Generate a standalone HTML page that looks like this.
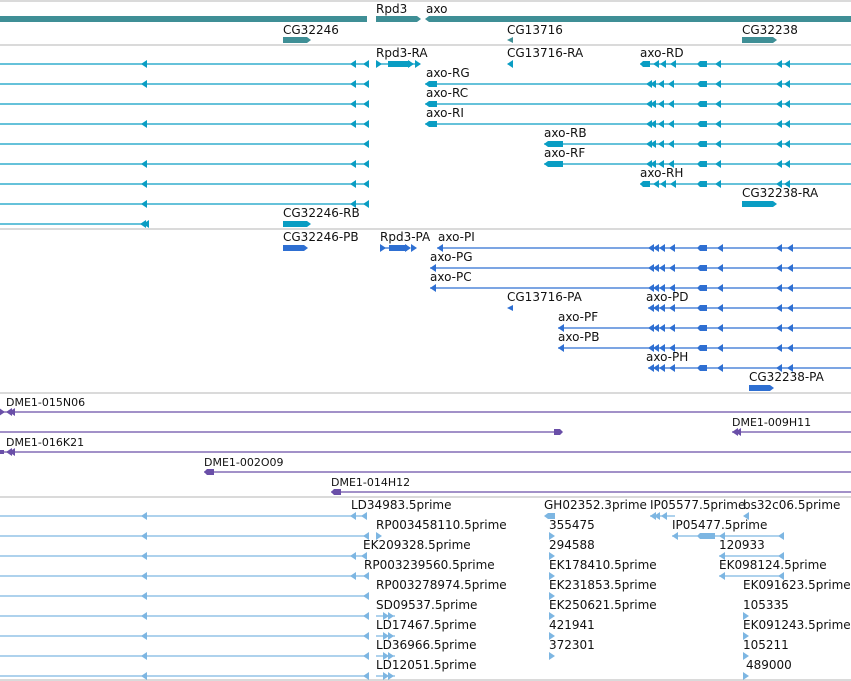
<!DOCTYPE html>
<html><head><meta charset="utf-8"><style>
html,body{margin:0;padding:0;background:#fff;width:851px;height:681px;overflow:hidden}
svg{display:block}
text{font-family:"DejaVu Sans","Liberation Sans",sans-serif;font-size:12px;fill:#111}
.d text{font-size:11px}
</style></head><body>
<svg width="851" height="681" viewBox="0 0 851 681" xmlns="http://www.w3.org/2000/svg">
<defs>
<polygon id="L" points="-3,0 3,-4 3,4"/>
<polygon id="R" points="3,0 -3,-4 -3,4"/>
</defs>
<g stroke="#c4c4c4" stroke-width="1.3">
<line x1="0" y1="1" x2="851" y2="1"/><line x1="0" y1="45" x2="851" y2="45"/>
<line x1="0" y1="229" x2="851" y2="229"/><line x1="0" y1="393" x2="851" y2="393"/>
<line x1="0" y1="497" x2="851" y2="497"/><line x1="0" y1="680" x2="851" y2="680"/>
</g>

<g fill="#3f8f96">
<rect x="0" y="16" width="367" height="6"/>
<polygon points="376,16 417,16 421,19 417,22 376,22"/>
<polygon points="425,19 429,16 851,16 851,22 429,22"/>
<polygon points="283,37 307,37 311,40 307,43 283,43"/>
<polygon points="507,40 513,37 513,43"/>
<polygon points="742,37 773,37 777,40 773,43 742,43"/>
</g>
<text x="376" y="13">Rpd3</text><text x="426" y="13">axo</text>
<text x="283" y="34">CG32246</text><text x="507" y="34">CG13716</text><text x="742" y="34">CG32238</text>

<g fill="#0a9dc3" stroke="#0a9dc3">
<g stroke-width="1.3">
<line x1="0" y1="64" x2="367" y2="64"/><line x1="0" y1="84" x2="367" y2="84"/>
<line x1="0" y1="104" x2="367" y2="104"/><line x1="0" y1="124" x2="367" y2="124"/>
<line x1="0" y1="144" x2="367" y2="144"/><line x1="0" y1="164" x2="367" y2="164"/>
<line x1="0" y1="184" x2="367" y2="184"/><line x1="0" y1="204" x2="367" y2="204"/>
<line x1="0" y1="224" x2="147" y2="224"/>
<line x1="376" y1="64" x2="420" y2="64"/>
<line x1="640" y1="64" x2="851" y2="64"/>
<line x1="425" y1="84" x2="851" y2="84"/><line x1="425" y1="104" x2="851" y2="104"/>
<line x1="425" y1="124" x2="851" y2="124"/>
<line x1="544" y1="144" x2="851" y2="144"/><line x1="544" y1="164" x2="851" y2="164"/>
<line x1="640" y1="184" x2="851" y2="184"/>
</g>
<g stroke="none">
<use href="#L" x="144" y="64"/><use href="#L" x="353" y="64"/><use href="#L" x="366" y="64"/>
<use href="#L" x="144" y="84"/><use href="#L" x="353" y="84"/><use href="#L" x="366" y="84"/>
<use href="#L" x="353" y="104"/><use href="#L" x="366" y="104"/>
<use href="#L" x="144" y="124"/><use href="#L" x="353" y="124"/><use href="#L" x="366" y="124"/>
<use href="#L" x="366" y="144"/>
<use href="#L" x="144" y="164"/><use href="#L" x="353" y="164"/><use href="#L" x="366" y="164"/>
<use href="#L" x="144" y="184"/><use href="#L" x="353" y="184"/><use href="#L" x="366" y="184"/>
<use href="#L" x="144" y="204"/><use href="#L" x="353" y="204"/><use href="#L" x="366" y="204"/>
<use href="#L" x="143" y="224"/><use href="#L" x="146" y="224"/>
<use href="#R" x="379" y="64"/><rect x="388" y="61" width="22" height="6"/><use href="#R" x="411" y="64"/><use href="#R" x="418" y="64"/>
<use href="#L" x="510" y="64"/>
<polygon points="640,64 643,61 650,61 650,67 643,67"/>
<use href="#L" x="656" y="64"/><use href="#L" x="663" y="64"/><use href="#L" x="673" y="64"/>
<polygon points="697,64 700,61 707,61 707,67 700,67"/><use href="#L" x="718" y="64"/><use href="#L" x="779" y="64"/><use href="#L" x="787" y="64"/>
<g id="ax">
<use href="#L" x="649" y="84"/><use href="#L" x="653" y="84"/><use href="#L" x="661" y="84"/><use href="#L" x="671" y="84"/>
<polygon points="697,84 700,81 707,81 707,87 700,87"/><use href="#L" x="718" y="84"/><use href="#L" x="779" y="84"/><use href="#L" x="787" y="84"/>
</g>
<use href="#ax" y="20"/><use href="#ax" y="40"/><use href="#ax" y="60"/><use href="#ax" y="80"/>
<polygon points="425,84 429,81 437,81 437,87 429,87"/>
<polygon points="425,104 429,101 437,101 437,107 429,107"/>
<polygon points="425,124 429,121 437,121 437,127 429,127"/>
<polygon points="544,144 548,141 563,141 563,147 548,147"/>
<polygon points="544,164 548,161 563,161 563,167 548,167"/>
<polygon points="640,184 643,181 650,181 650,187 643,187"/>
<use href="#L" x="656" y="184"/><use href="#L" x="663" y="184"/><use href="#L" x="673" y="184"/>
<polygon points="697,184 700,181 707,181 707,187 700,187"/><use href="#L" x="718" y="184"/><use href="#L" x="779" y="184"/><use href="#L" x="787" y="184"/>
<polygon points="742,201 773,201 777,204 773,207 742,207"/>
<polygon points="283,221 307,221 311,224 307,227 283,227"/>
</g></g>
<text x="376" y="57">Rpd3-RA</text><text x="507" y="57">CG13716-RA</text><text x="640" y="57">axo-RD</text>
<text x="426" y="77">axo-RG</text><text x="426" y="97">axo-RC</text><text x="426" y="117">axo-RI</text>
<text x="544" y="137">axo-RB</text><text x="544" y="157">axo-RF</text><text x="640" y="177">axo-RH</text>
<text x="742" y="197">CG32238-RA</text><text x="283" y="217">CG32246-RB</text>

<g fill="#2e6fd2" stroke="#2e6fd2">
<g stroke-width="1.3">
<line x1="380" y1="248" x2="402" y2="248"/>
<line x1="437" y1="248" x2="851" y2="248"/><line x1="430" y1="268" x2="851" y2="268"/>
<line x1="430" y1="288" x2="851" y2="288"/><line x1="648" y1="308" x2="851" y2="308"/>
<line x1="558" y1="328" x2="851" y2="328"/><line x1="558" y1="348" x2="851" y2="348"/>
<line x1="648" y1="368" x2="851" y2="368"/>
</g>
<g stroke="none">
<polygon points="283,245 304,245 308,248 304,251 283,251"/>
<use href="#R" x="383" y="248"/><rect x="389" y="245" width="18" height="6"/><use href="#R" x="408" y="248"/><use href="#R" x="414" y="248"/>
<use href="#L" x="440" y="248"/><use href="#L" x="433" y="268"/><use href="#L" x="433" y="288"/>
<use href="#L" x="561" y="328"/><use href="#L" x="561" y="348"/>
<polygon points="507,308 513,305 513,311"/>
<g id="pf">
<use href="#L" x="651" y="248"/><use href="#L" x="656" y="248"/><use href="#L" x="662" y="248"/><use href="#L" x="672" y="248"/>
<polygon points="697,248 700,245 707,245 707,251 700,251"/><use href="#L" x="720" y="248"/><use href="#L" x="779" y="248"/><use href="#L" x="790" y="248"/>
</g>
<use href="#pf" y="20"/><use href="#pf" y="40"/><use href="#pf" y="60"/><use href="#pf" y="80"/><use href="#pf" y="100"/><use href="#pf" y="120"/>
<polygon points="749,385 770,385 774,388 770,391 749,391"/>
</g></g>
<text x="283" y="241">CG32246-PB</text><text x="380" y="241">Rpd3-PA</text><text x="438" y="241">axo-PI</text>
<text x="430" y="261">axo-PG</text><text x="430" y="281">axo-PC</text>
<text x="507" y="301">CG13716-PA</text><text x="646" y="301">axo-PD</text>
<text x="558" y="321">axo-PF</text><text x="558" y="341">axo-PB</text><text x="646" y="361">axo-PH</text>
<text x="749" y="381">CG32238-PA</text>

<g fill="#6a4fa8" stroke="#6a4fa8">
<g stroke-width="1.3">
<line x1="0" y1="412" x2="851" y2="412"/><line x1="0" y1="432" x2="558" y2="432"/>
<line x1="732" y1="432" x2="851" y2="432"/><line x1="0" y1="452" x2="851" y2="452"/>
<line x1="204" y1="472" x2="851" y2="472"/><line x1="331" y1="492" x2="851" y2="492"/>
</g>
<g stroke="none">
<use href="#R" x="2" y="412"/><use href="#L" x="9" y="412"/><use href="#L" x="12" y="412"/>
<polygon points="554,429 560,429 563,432 560,435 554,435"/>
<use href="#L" x="735" y="432"/><use href="#L" x="738" y="432"/>
<rect x="0" y="450" width="4" height="4"/><use href="#L" x="9" y="452"/><use href="#L" x="12" y="452"/>
<polygon points="204,472 207,469 214,469 214,475 207,475"/>
<polygon points="331,492 334,489 341,489 341,495 334,495"/>
</g></g>
<g class="d">
<text x="6" y="406">DME1-015N06</text><text x="732" y="426">DME1-009H11</text>
<text x="6" y="446">DME1-016K21</text><text x="204" y="466">DME1-002O09</text><text x="331" y="486">DME1-014H12</text>
</g>

<g fill="#7db6e2" stroke="#7db6e2">
<g stroke-width="1.3">
<line x1="0" y1="516" x2="365" y2="516"/><line x1="0" y1="536" x2="367" y2="536"/>
<line x1="0" y1="556" x2="365" y2="556"/><line x1="0" y1="576" x2="367" y2="576"/>
<line x1="0" y1="596" x2="367" y2="596"/><line x1="0" y1="616" x2="367" y2="616"/>
<line x1="0" y1="636" x2="367" y2="636"/><line x1="0" y1="656" x2="367" y2="656"/>
<line x1="0" y1="676" x2="367" y2="676"/>
<line x1="650" y1="516" x2="675" y2="516"/>
<line x1="672" y1="536" x2="781" y2="536"/><line x1="719" y1="556" x2="781" y2="556"/><line x1="719" y1="576" x2="781" y2="576"/>
<line x1="376" y1="616" x2="395" y2="616"/><line x1="376" y1="636" x2="395" y2="636"/>
<line x1="376" y1="656" x2="395" y2="656"/><line x1="376" y1="676" x2="395" y2="676"/>
</g>
<g stroke="none">
<use href="#L" x="144" y="516"/><use href="#L" x="353" y="516"/><use href="#L" x="364" y="516"/>
<use href="#L" x="144" y="536"/><use href="#L" x="366" y="536"/>
<use href="#L" x="144" y="556"/><use href="#L" x="353" y="556"/><use href="#L" x="364" y="556"/>
<use href="#L" x="144" y="576"/><use href="#L" x="353" y="576"/><use href="#L" x="366" y="576"/>
<use href="#L" x="144" y="596"/><use href="#L" x="366" y="596"/>
<use href="#L" x="144" y="616"/><use href="#L" x="366" y="616"/>
<use href="#L" x="144" y="636"/><use href="#L" x="366" y="636"/>
<use href="#L" x="144" y="656"/><use href="#L" x="366" y="656"/>
<use href="#L" x="144" y="676"/><use href="#L" x="366" y="676"/>
<use href="#R" x="379" y="536"/>
<use href="#R" x="386" y="616"/><use href="#R" x="391" y="616"/><use href="#R" x="386" y="636"/><use href="#R" x="391" y="636"/>
<use href="#R" x="386" y="656"/><use href="#R" x="391" y="656"/><use href="#R" x="386" y="676"/><use href="#R" x="391" y="676"/>
<polygon points="544,516 548,513 555,513 555,519 548,519"/>
<use href="#R" x="552" y="536"/><use href="#R" x="552" y="556"/><use href="#R" x="552" y="576"/><use href="#R" x="552" y="596"/>
<use href="#R" x="552" y="616"/><use href="#R" x="552" y="636"/><use href="#R" x="552" y="656"/>
<use href="#L" x="653" y="516"/><use href="#L" x="657" y="516"/><use href="#L" x="664" y="516"/>
<use href="#L" x="746" y="516"/>
<use href="#L" x="675" y="536"/><polygon points="697,536 700,533 715,533 715,539 700,539"/><use href="#L" x="722" y="536"/><use href="#L" x="781" y="536"/>
<use href="#L" x="722" y="556"/><use href="#L" x="781" y="556"/>
<use href="#L" x="722" y="576"/><use href="#L" x="781" y="576"/>
<use href="#R" x="746" y="616"/><use href="#R" x="746" y="636"/><use href="#R" x="746" y="656"/><use href="#R" x="746" y="676"/>
</g></g>
<text x="351" y="509">LD34983.5prime</text><text x="544" y="509">GH02352.3prime</text><text x="650" y="509">IP05577.5prime</text><text x="743" y="509">bs32c06.5prime</text>
<text x="376" y="529">RP003458110.5prime</text><text x="549" y="529">355475</text><text x="672" y="529">IP05477.5prime</text>
<text x="363" y="549">EK209328.5prime</text><text x="549" y="549">294588</text><text x="719" y="549">120933</text>
<text x="364" y="569">RP003239560.5prime</text><text x="549" y="569">EK178410.5prime</text><text x="719" y="569">EK098124.5prime</text>
<text x="376" y="589">RP003278974.5prime</text><text x="549" y="589">EK231853.5prime</text><text x="743" y="589">EK091623.5prime</text>
<text x="376" y="609">SD09537.5prime</text><text x="549" y="609">EK250621.5prime</text><text x="743" y="609">105335</text>
<text x="376" y="629">LD17467.5prime</text><text x="549" y="629">421941</text><text x="743" y="629">EK091243.5prime</text>
<text x="376" y="649">LD36966.5prime</text><text x="549" y="649">372301</text><text x="743" y="649">105211</text>
<text x="376" y="669">LD12051.5prime</text><text x="746" y="669">489000</text>
</svg>
</body></html>
